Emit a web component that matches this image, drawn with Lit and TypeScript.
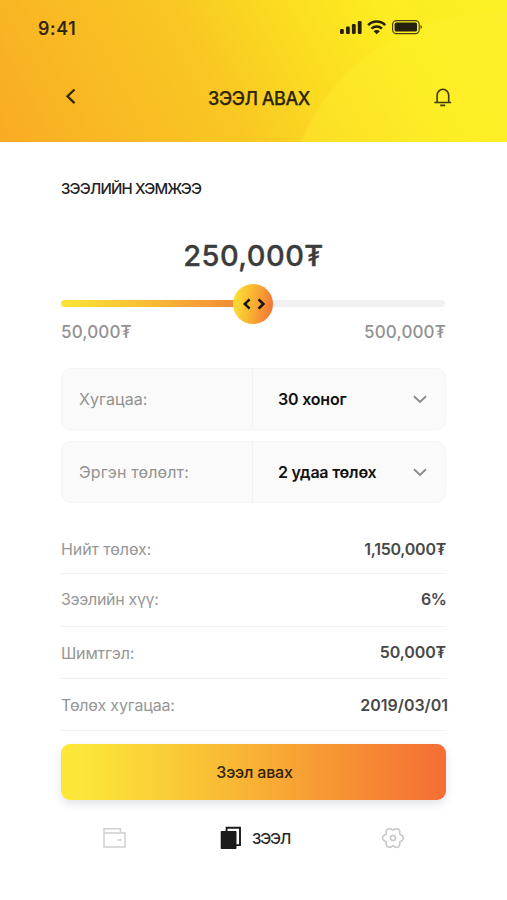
import { LitElement, html, css, svg } from "lit";
import { customElement } from "lit/decorators.js";

// Six-lobed cog outline, traced in polar coordinates around (12, 12).
const cogPath = Array.from({ length: 72 }, (_, i) => {
  const t = (i * Math.PI) / 36;
  const r = 9.3 + 1.2 * Math.cos(6 * t) - 0.2 * Math.cos(12 * t);
  return `${i ? "L" : "M"}${(12 + r * Math.cos(t)).toFixed(2)} ${(12 + r * Math.sin(t)).toFixed(2)}`;
}).join("") + "Z";

@customElement("status-bar")
class StatusBar extends LitElement {
  static styles = css`
    :host { display: flex; justify-content: space-between; height: 18px; padding: 20px 84px 0 38px; }
    .time { font-size: 18px; line-height: 18px; font-weight: 500; letter-spacing: 0.7px; -webkit-text-stroke: 0.2px; }
    .icons { height: 16px; margin-top: -1px; }
  `;
  render() {
    return html`
      <span class="time">9:41</span>
      <svg class="icons" width="84" height="16" viewBox="339 19 84 16" fill="#25200f">
        ${[[340, 29, 5], [346, 26.5, 7.5], [351.9, 24, 10], [357.8, 21, 13]].map(
          ([x, y, h]) => svg`<rect x=${x} y=${y} width="3.8" height=${h} rx="1.2"/>`)}
        <g fill="none" stroke="#25200f" stroke-width="2.5">
          <path d="M368.2 25.1a11.8 11.8 0 0 1 17 0"/>
          <path d="M371.5 28.7a7.4 7.4 0 0 1 10.4 0"/>
        </g>
        <path d="M373.6 31.2a4.4 4.4 0 0 1 6.2 0l-3.1 3.1z"/>
        <rect x="392.6" y="20.6" width="26.6" height="13" rx="3.8" fill="none" stroke="#4b4310" stroke-width="1.2"/>
        <rect x="394.6" y="22.6" width="22.4" height="9" rx="1.6"/>
        <path d="M420.6 25a2.4 2.4 0 0 1 0 4.2z"/>
      </svg>`;
  }
}

@customElement("select-row")
class SelectRow extends LitElement {
  static styles = css`
    :host { display: grid; grid-template-columns: 191px 1fr; height: 62px; box-sizing: border-box; border: 1px solid #f4f4f4; border-radius: 10px; background: #fafafa; font-size: 16px; }
    .label, .value { display: flex; align-items: center; }
    .label { padding: 0 0 0 17px; border-right: 1px solid #f2f2f2; color: #929292; }
    .value { padding: 0 18px 0 25px; justify-content: space-between; color: #111; font-weight: 600; }
  `;
  render() {
    return html`
      <div class="label"><slot name="label"></slot></div>
      <div class="value">
        <slot name="value"></slot>
        <svg class="chev" width="14" height="9" viewBox="0 0 14 9" fill="none"><path d="M1 1.2 7 7 13 1.2" stroke="#8b8b8b" stroke-width="1.9"/></svg>
      </div>`;
  }
}

@customElement("app-root")
class AppRoot extends LitElement {
  static styles = css`
    :host { display: flex; flex-direction: column; width: 507px; height: 900px; overflow: hidden; background: #fff; color: #252525; font-family: Inter, "Noto Sans", sans-serif; }
    span { white-space: nowrap; }
    .header { height: 142px; color: #2b240e; background:
      radial-gradient(circle at 494px 222px, rgba(255,240,48,.3) 0, rgba(255,240,48,.36) 208px, transparent 210px),
      linear-gradient(62deg, #f9ab23 0%, #f9bb24 22%, #f9c723 42%, #fbdc20 60%, #fdec20 77%, #fbf026 100%); }
    .bar { display: grid; grid-template-columns: 20px 1fr 20px; align-items: center; height: 28px; margin: 45px 54px 0 61px; }
    .title { justify-self: center; font-size: 18px; font-weight: 500; letter-spacing: -0.45px; padding: 2px 0 0 4px; -webkit-text-stroke: 0.25px; }
    .back { margin-top: -2px; }
    .main { display: flex; flex-direction: column; margin: 0 61px; width: 385px; }
    .section { margin-top: 38px; height: 18px; line-height: 18px; font-size: 15px; font-weight: 500; letter-spacing: -0.8px; color: #222; }
    .amount { margin-top: 40px; height: 36px; line-height: 36px; font-size: 29px; font-weight: 500; letter-spacing: 0.45px; color: #3c3c3c; text-align: center; -webkit-text-stroke: 0.35px; }
    .slider { position: relative; display: flex; align-items: center; height: 40px; margin-top: 10px; }
    .rest { width: 384px; height: 7px; margin-top: -1px; border-radius: 4px; background: #f1f1f1; }
    .fill { width: 190px; height: 7px; border-radius: 4px; background: linear-gradient(90deg, #fbe536, #f8bd33 45%, #f18238); }
    .knob { position: absolute; left: 172px; top: 0; width: 40px; height: 40px; border-radius: 50%; background: linear-gradient(100deg, #fce436 5%, #f9b032 50%, #f46e35 98%); }
    .range { display: flex; justify-content: space-between; height: 20px; line-height: 20px; margin-top: -2px; font-size: 17px; font-weight: 500; color: #929292; letter-spacing: 0.15px; }
    .selects { display: flex; flex-direction: column; gap: 11px; margin-top: 26px; }
    .l1 { letter-spacing: 0.05px; }
    .l2 { letter-spacing: 0.12px; }
    .v1 { letter-spacing: -0.18px; }
    .v2 { letter-spacing: -0.2px; }
    .facts { display: grid; grid-template-rows: 54px 53px 52px 52px; margin-top: 17px; }
    .fact { display: flex; justify-content: space-between; align-items: center; border-bottom: 1px solid #f1f1f1; font-size: 16px; }
    .fact:first-child { padding-top: 4px; }
    .fact:nth-child(2) { padding-bottom: 2px; }
    .k { color: #979797; }
    .v { color: #484848; font-weight: 600; letter-spacing: -0.13px; }
    .k-a { letter-spacing: -0.1px; }
    .k-b { letter-spacing: -0.32px; }
    .k-c { letter-spacing: -0.2px; }
    .k-d { letter-spacing: -0.17px; }
    .v-a { letter-spacing: -0.25px; }
    .v-b { letter-spacing: -0.7px; }
    .v-c { margin-top: -2px; }
    .v-d { margin-right: -2px; letter-spacing: 0; }
    .cta { display: flex; align-items: center; justify-content: center; height: 56px; margin-top: 13px; border-radius: 9px; background: linear-gradient(90deg, #fce738 5%, #f9b434 48%, #f57034 98%); box-shadow: 0 4px 9px rgba(80,90,120,.16); color: #30230c; font-size: 16px; font-weight: 500; letter-spacing: -0.2px; padding-left: 2px; }
    .nav { display: flex; align-items: center; justify-content: space-between; height: 28px; margin: 24px 102px 0; }
    .active { display: flex; align-items: center; gap: 10px; font-size: 15px; font-weight: 500; letter-spacing: -1.2px; margin-left: 2px; }
  `;
  render() {
    const facts = [
      ["Нийт төлөх:", "1,150,000₮", "a"],
      ["Зээлийн хүү:", "6%", "b"],
      ["Шимтгэл:", "50,000₮", "c"],
      ["Төлөх хугацаа:", "2019/03/01", "d"],
    ];
    return html`
      <header class="header">
        <status-bar></status-bar>
        <div class="bar">
          <svg class="back" width="20" height="24" viewBox="61 84 20 24" fill="none"><path d="M74.5 89.5 67.5 96.3l7 6.8" stroke="#33270c" stroke-width="2.3"/></svg>
          <span class="title">ЗЭЭЛ АВАХ</span>
          <svg width="20" height="24" viewBox="433 85 20 24" fill="none" stroke="#3f390f" stroke-width="1.6"><path d="M437.1 102.3V95.5a5.8 6.2 0 0 1 11.6 0v6.8M434.4 102.5h16.8M440.2 105.4h5"/></svg>
        </div>
      </header>
      <main class="main">
        <span class="section">ЗЭЭЛИЙН ХЭМЖЭЭ</span>
        <span class="amount">250,000₮</span>
        <div class="slider">
          <div class="rest"><div class="fill"></div></div>
          <svg class="knob" viewBox="0 0 40 40" fill="none" stroke="#18120a" stroke-width="2.5"><path d="m16.6 15.4-4.8 4.6 4.8 4.6M25.6 15.4l4.8 4.6-4.8 4.6"/></svg>
        </div>
        <div class="range"><span>50,000₮</span><span>500,000₮</span></div>
        <div class="selects">
          <select-row><span class="l1" slot="label">Хугацаа:</span><span class="v1" slot="value">30 хоног</span></select-row>
          <select-row><span class="l2" slot="label">Эргэн төлөлт:</span><span class="v2" slot="value">2 удаа төлөх</span></select-row>
        </div>
        <div class="facts">
          ${facts.map(([k, v, id]) => html`<div class="fact"><span class="k k-${id}">${k}</span><span class="v v-${id}">${v}</span></div>`)}
        </div>
        <div class="cta"><span>Зээл авах</span></div>
      </main>
      <nav class="nav">
        <svg width="25" height="24" viewBox="102 826 25 24" fill="none" stroke="#d0d0d0" stroke-width="1.5"><path d="M104 833V847h21v-14zM104 833V828.7h16.5v4.3M117.5 840h3.2v-1.2"/></svg>
        <div class="active">
          <svg width="22" height="24" viewBox="221 826 22 24"><path d="M227.6 832v-4.2h13.4v17.3H237" fill="none" stroke="#1b1b1b" stroke-width="1.9"/><rect x="221.7" y="831" width="15.8" height="18" rx=".8" fill="#1b1b1b"/></svg>
          <span>ЗЭЭЛ</span>
        </div>
        <svg width="24" height="24" viewBox="0 0 24 24" fill="none" stroke="#c9c9c9" stroke-width="1.7" stroke-linejoin="round"><path d=${cogPath}/><circle cx="12" cy="12" r="2.5"/></svg>
      </nav>`;
  }
}
